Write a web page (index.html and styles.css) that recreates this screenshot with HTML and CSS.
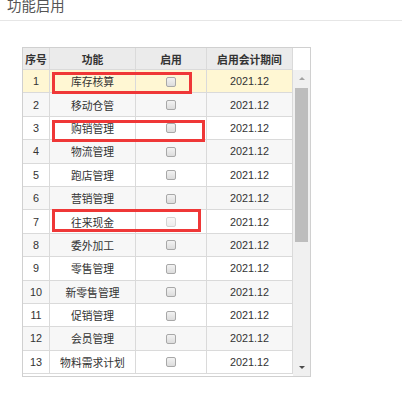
FILE: index.html
```html
<!DOCTYPE html>
<html>
<head>
    <title>功能启用</title>
    <link rel="stylesheet" href="styles.css">
</head>
<body>
    <div class="page-header">
        <h2 class="page-title">功能启用</h2>
    </div>

    <div class="grid-box">
        <div class="grid-main">
            <table class="grid-table" id="moduleTable">
                <thead>
                    <tr>
                        <th class="c-no">序号</th>
                        <th class="c-name">功能</th>
                        <th class="c-on">启用</th>
                        <th class="c-period">启用会计期间</th>
                    </tr>
                </thead>
                <tbody>

                </tbody>
            </table>
        </div>
        <div class="scrollbar">
            <div class="sb-head"></div>
            <div class="sb-track">
                <div class="sb-btn"><span class="arrow-up"></span></div>
                <div class="sb-thumb"></div>
                <div class="sb-space"></div>
                <div class="sb-btn"><span class="arrow-down"></span></div>
            </div>
        </div>

        <div class="mark mark-1"></div>
        <div class="mark mark-3"></div>
        <div class="mark mark-7"></div>
    </div>

    <script>
        const modules = [
            "库存核算", "移动仓管", "购销管理", "物流管理", "跑店管理",
            "营销管理", "往来现金", "委外加工", "零售管理", "新零售管理",
            "促销管理", "会员管理", "物料需求计划"
        ];

        function renderModuleTable() {
            const body = document.querySelector("#moduleTable tbody");
            body.innerHTML = "";

            modules.forEach((name, index) => {
                const row = document.createElement("tr");
                if (index === 0) row.className = "selected";
                const disabled = index === 6 ? "disabled" : "";

                row.innerHTML = `
                    <td>${index + 1}</td>
                    <td>${name}</td>
                    <td><input type="checkbox" class="check" ${disabled}></td>
                    <td>2021.12</td>
                `;

                body.appendChild(row);
            });
        }

        renderModuleTable();
    </script>
</body>
</html>
```

FILE: styles.css
```css
body {
    font-family: "Liberation Sans", "Noto Sans CJK SC", sans-serif;
    margin: 0;
    padding: 0;
    color: #333;
    background-color: #fff;
}

.page-header {
    height: 20px;
    border-bottom: 1px solid #e6e6e6;
}

    .page-header .page-title {
        margin: 0;
        padding-left: 7px;
        font-size: 14.4px;
        font-weight: normal;
        line-height: 13px;
        color: #555;
    }

.grid-box {
    position: relative;
    display: flex;
    width: fit-content;
    height: 328px;
    margin: 26px 0 0 22px;
    border: 1px solid #d0d0d0;
    overflow: hidden;
}

.grid-main {
    height: 328px;
    overflow: hidden;
}

.grid-table {
    border-collapse: separate;
    border-spacing: 0;
    table-layout: fixed;
    width: 270px;
    font-size: 10.8px;
}

    .grid-table th,
    .grid-table td {
        box-sizing: border-box;
        padding: 0;
        text-align: center;
        border-right: 1px solid #dadada;
        border-bottom: 1px solid #dadada;
        white-space: nowrap;
    }

    .grid-table th {
        height: 22px;
        background-color: #ebebeb;
        font-weight: bold;
        color: #333;
    }

    .grid-table td {
        height: 23.4px;
        background-color: #fff;
    }

    .grid-table tbody tr:nth-child(even) td {
        background-color: #f7f7f7;
    }

    .grid-table tbody tr.selected td {
        background-color: #fff7d3;
    }

    .grid-table .c-no {
        width: 27px;
    }

    .grid-table .c-name {
        width: 86px;
    }

    .grid-table .c-on {
        width: 71px;
    }

    .grid-table .c-period {
        width: 86px;
    }

.check {
    appearance: none;
    display: block;
    width: 10px;
    height: 10px;
    margin: 1px auto 0;
    border: 1px solid #a8a8a8;
    border-radius: 2px;
    background: linear-gradient(#f2f2f2, #dcdcdc);
}

    .check:disabled {
        border-color: #d4d4d4;
        background: linear-gradient(#f8f8f8, #ececec);
    }

.scrollbar {
    display: flex;
    flex-direction: column;
    width: 17px;
}

.sb-head {
    height: 22px;
    background-color: #fff;
}

.sb-track {
    flex: 1;
    display: flex;
    flex-direction: column;
    background-color: #f0f0f0;
}

.sb-btn {
    height: 17px;
    display: flex;
    align-items: center;
    justify-content: center;
}

.sb-thumb {
    height: 154px;
    margin: 1px 2px 0;
    background-color: #bdbdbd;
}

.sb-space {
    flex: 1;
}

.arrow-up {
    width: 0;
    height: 0;
    border-left: 3px solid transparent;
    border-right: 3px solid transparent;
    border-bottom: 3px solid #a3a3a3;
}

.arrow-down {
    width: 0;
    height: 0;
    border-left: 3px solid transparent;
    border-right: 3px solid transparent;
    border-top: 3px solid #4a4a4a;
}

.mark {
    position: absolute;
    box-sizing: border-box;
    border: 3px solid #ef3737;
}

.mark-1 {
    left: 29px;
    top: 24px;
    width: 140px;
    height: 22px;
}

.mark-3 {
    left: 29px;
    top: 72px;
    width: 153px;
    height: 22px;
}

.mark-7 {
    left: 29px;
    top: 161px;
    width: 149px;
    height: 23px;
}
```
